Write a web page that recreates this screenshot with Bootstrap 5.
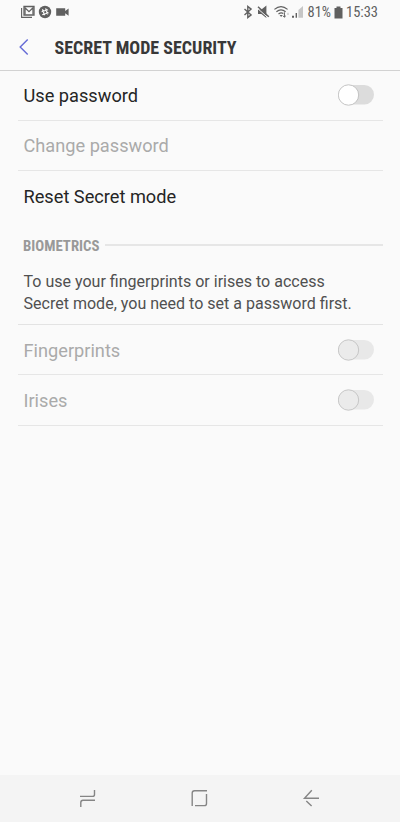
<!DOCTYPE html>
<html lang="en">
<head>
<meta charset="utf-8">
<meta name="viewport" content="width=device-width, initial-scale=1">
<title>Secret mode security</title>
<link rel="stylesheet" href="https://cdn.jsdelivr.net/npm/bootstrap@5.3.0/dist/css/bootstrap.min.css">
<style>
body{height:822px;background:#fafafa;font-family:Roboto,sans-serif;color:#252525;overflow:hidden}
svg{display:block;flex:none}
.cond{display:inline-block;white-space:nowrap;font-stretch:75%}
.statusbar{height:24px;padding:0 22px 0 21px;color:#606060;font-size:14.5px;line-height:24px}
.statusbar .cond{padding-top:2px}
.status-right{gap:3px}
.titlebar{height:47px;padding-left:18px;border-bottom:1px solid #d2d2d2}
.titlebar h1{font-size:18px;line-height:46px;font-weight:700;margin-left:24.5px;padding-top:1px;color:#383838}
.pref{height:50px;padding:2px 8px 0 6px;border-bottom:1px solid #e6e6e6;font-size:18.2px;line-height:48px}
.pref.upper{padding-top:0}
.pref.middle{padding-top:1px}
.pref.tall{height:51px}
.off{color:#aaa}
.prefs{padding:0 17.5px}
.section{height:47px;font-size:14.8px;font-weight:700;color:#999;padding-left:5.5px}
.section .cond{padding-top:1px}
.rule{height:2px;background:#e6e6e6;margin:0 0 2px 6px}
.note{height:56px;padding:1.5px 0 0 6px;border-bottom:1px solid #e3e3e3;font-size:16.04px;line-height:22.5px;color:#505050}
.toggle{width:37px;height:22px;padding:0;border:0;background:none;margin-top:-2px}
.navkeys{height:47px;background:#f4f4f4}
</style>
</head>
<body class="d-flex flex-column">
<div class="statusbar d-flex align-items-center">
  <svg width="50" height="16" viewBox="0 0 50 16" fill="none" stroke="#606060">
    <path d="M.6 4v9.4H11" stroke-width="1.1"/>
    <path d="M3 2.5h10v8.5H3z" stroke-width="1.3"/>
    <path d="M4 10.5V3.8l4 3.8 4-3.8v6.7" stroke-width="1.3"/>
    <circle cx="24" cy="8" r="6.2" fill="#606060" stroke="none"/>
    <path d="M21.5 5.2l2 6M24.6 4.4l2 6M20.6 7.7l6.4-2M21.2 10.7l6.4-2" stroke="#fafafa" stroke-width="1.2"/>
    <path d="M35.2 4.2h9v2.7l3.4-2.4v7.2l-3.4-2.4v2.5h-9z" fill="#606060" stroke="none"/>
  </svg>
  <div class="status-right d-flex align-items-center ms-auto">
    <svg width="62" height="16" viewBox="242 4 62 16" fill="none" stroke="#606060">
      <path d="M244.5 9l6.6 5.9-3.3 2.7V6.4l3.3 2.7-6.6 5.9" stroke-width="1.4"/>
      <path d="M258 9.5h3.4l5-4v12.5l-5-4h-3.4z" fill="#606060" stroke="none"/>
      <path d="M257.6 8.4l10.6 9.6" stroke="#fafafa" stroke-width="1"/><path d="M258 6.7l10.8 10" stroke-width="1.5"/>
      <path d="M274.4 9.4q6.6-5.5 13.2 0M276.4 11.7q4.6-3.7 9.2 0M278.5 14q2.6-2 4.8-.5" stroke-width="1.2"/>
      <path d="M279.6 15h3l-1.5 2z" fill="#606060" stroke="none"/>
      <path d="M284.4 12.3v4.8m-1.4-1.3l1.4 1.4 1.4-1.4" stroke-width="1"/>
      <path d="M288 12.8v2.2" stroke="#bbb"/>
      <path d="M292 15.8h2v2h-2zM295.6 13h1.4v4.8h-1.4z" fill="#606060" stroke="none"/>
      <path d="M298.4 10l4.6-4v11.8h-4.6z" fill="#c6c6c6" stroke="none"/>
    </svg>
    <span class="cond">81%</span>
    <svg width="9" height="13" viewBox="0 0 9 13"><path d="M2.5 .5h4v1.5h2V12.5H.5V2h2z" fill="#606060"/></svg>
    <span class="cond">15:33</span>
  </div>
</div>
<header class="titlebar d-flex align-items-center">
  <svg width="12" height="18" viewBox="0 0 12 18" fill="none" stroke="#656bd6" stroke-width="1.4"><path d="M9.7 1.5L2.2 9l7.5 7.5"/></svg>
  <h1 class="cond mb-0">SECRET MODE SECURITY</h1>
</header>
<main class="prefs flex-grow-1">
  <div class="pref upper d-flex align-items-center justify-content-between"><span>Use password</span>
    <button class="toggle" aria-label="Use password"><svg width="37" height="22"><rect x="5" y="1" width="31" height="19.5" rx="9.7" fill="#dcdcdc"/><circle cx="10.5" cy="11" r="10.2" fill="#fff" stroke="#bdbdbd" stroke-width=".9"/></svg></button></div>
  <div class="pref middle off">Change password</div>
  <div class="pref border-0 tall">Reset Secret mode</div>
  <div class="section d-flex align-items-center"><span class="cond">BIOMETRICS</span><div class="rule flex-grow-1"></div></div>
  <p class="note mb-0">To use your fingerprints or irises to access<br>Secret mode, you need to set a password first.</p>
  <div class="pref off d-flex align-items-center justify-content-between"><span>Fingerprints</span>
    <button class="toggle" aria-label="Fingerprints"><svg width="37" height="22"><rect x="5" y="1" width="31" height="19.5" rx="9.7" fill="#e8e8e8"/><circle cx="10.5" cy="11" r="10.2" fill="#ebebeb" stroke="#c2c2c2" stroke-width=".9"/></svg></button></div>
  <div class="pref off tall d-flex align-items-center justify-content-between"><span>Irises</span>
    <button class="toggle" aria-label="Irises"><svg width="37" height="22"><rect x="5" y="1" width="31" height="19.5" rx="9.7" fill="#e8e8e8"/><circle cx="10.5" cy="11" r="10.2" fill="#ebebeb" stroke="#c2c2c2" stroke-width=".9"/></svg></button></div>
</main>
<nav class="navkeys">
  <svg width="400" height="47" viewBox="0 775 400 47" fill="none" stroke="#858585" stroke-width="1.4">
    <path d="M80 796.4h12.5q2 0 2-2V790M95 800.3H83q-2.2 0-2.2 2.2v4.5"/>
    <path d="M207 790.8h-12.5q-2.3 0-2.3 2.3V806M206.5 794v9.4q0 2.2-2.2 2.2H195"/>
    <path d="M319 798.3h-14.5l7.3-8M306.3 801l5.3 5"/>
  </svg>
</nav>
<script src="https://cdn.jsdelivr.net/npm/bootstrap@5.3.0/dist/js/bootstrap.bundle.min.js"></script>
</body>
</html>
